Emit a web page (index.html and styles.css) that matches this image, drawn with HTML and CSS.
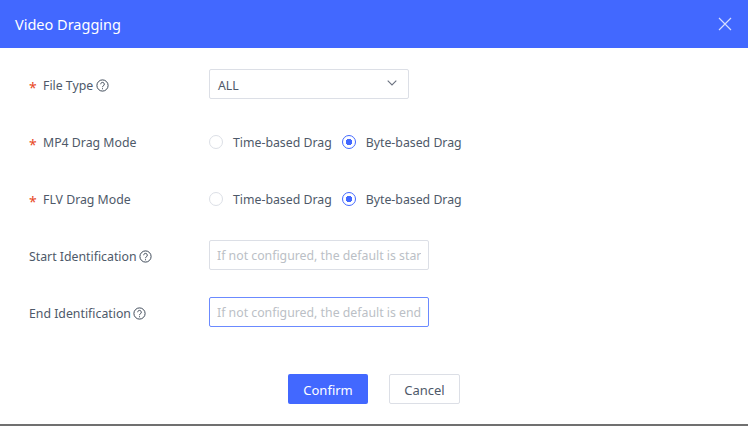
FILE: index.html
```html
<!DOCTYPE html>
<html lang="en">
<head>
    <meta charset="UTF-8">
    <title>Video Dragging</title>
    <link rel="stylesheet" href="styles.css">
</head>
<body>
<div class="dialog">
    <div class="dialog-header">
        <h2>Video Dragging</h2>
        <svg class="close-icon" width="14" height="14" viewBox="0 0 14 14"><path d="M1 1L13 13M13 1L1 13" stroke="#d5ddff" stroke-width="1.2" fill="none"/></svg>
    </div>
    <form class="dialog-body">
        <div class="form-row">
            <label class="required">File Type
                <svg class="help-icon" width="13" height="13" viewBox="0 0 13 13"><circle cx="6.5" cy="6.5" r="5.6" fill="none" stroke="#3f4a59"/><path d="M4.7 5.2a1.8 1.8 0 1 1 2.8 1.5c-.6.4-1 .7-1 1.5" fill="none" stroke="#3f4a59"/><path d="M6 9.2h1v1H6z" fill="#3f4a59"/></svg>
            </label>
            <div class="select">ALL
                <svg width="10" height="6" viewBox="0 0 10 6"><path d="M.7.7L5 5l4.3-4.3" fill="none" stroke="#6b7280" stroke-width="1.1"/></svg>
            </div>
        </div>
        <div class="form-row">
            <label class="required">MP4 Drag Mode</label>
            <div class="radio-group">
                <span class="radio"><i></i>Time-based Drag</span>
                <span class="radio checked"><i></i>Byte-based Drag</span>
            </div>
        </div>
        <div class="form-row">
            <label class="required">FLV Drag Mode</label>
            <div class="radio-group">
                <span class="radio"><i></i>Time-based Drag</span>
                <span class="radio checked"><i></i>Byte-based Drag</span>
            </div>
        </div>
        <div class="form-row">
            <label>Start Identification
                <svg class="help-icon" width="13" height="13" viewBox="0 0 13 13"><circle cx="6.5" cy="6.5" r="5.6" fill="none" stroke="#3f4a59"/><path d="M4.7 5.2a1.8 1.8 0 1 1 2.8 1.5c-.6.4-1 .7-1 1.5" fill="none" stroke="#3f4a59"/><path d="M6 9.2h1v1H6z" fill="#3f4a59"/></svg>
            </label>
            <input type="text" placeholder="If not configured, the default is start">
        </div>
        <div class="form-row">
            <label>End Identification
                <svg class="help-icon" width="13" height="13" viewBox="0 0 13 13"><circle cx="6.5" cy="6.5" r="5.6" fill="none" stroke="#3f4a59"/><path d="M4.7 5.2a1.8 1.8 0 1 1 2.8 1.5c-.6.4-1 .7-1 1.5" fill="none" stroke="#3f4a59"/><path d="M6 9.2h1v1H6z" fill="#3f4a59"/></svg>
            </label>
            <input class="focused" type="text" placeholder="If not configured, the default is end">
        </div>
        <div class="dialog-footer">
            <button class="btn-primary" type="button">Confirm</button>
            <button class="btn-default" type="button">Cancel</button>
        </div>
    </form>
</div>
</body>
</html>
```

FILE: styles.css
```css
html, body {
    margin: 0;
    padding: 0;
    height: 100%;
    background-color: #fff;
    overflow: hidden;
}
body {
    font-family: "Noto Sans", Arial, sans-serif;
    font-size: 12.3px;
    color: #4e5969;
}
.dialog {
    width: 748px;
    height: 424px;
    border-bottom: 2px solid #707070;
}
.dialog-header {
    height: 48px;
    padding: 0 15px;
    background-color: #4268ff;
    display: flex;
    align-items: center;
    justify-content: space-between;
}
.dialog-header h2 {
    margin: 0;
    font-size: 14.5px;
    font-weight: 400;
    color: #fff;
}
.close-icon {
    margin-right: 1px;
}
.dialog-body {
    padding: 21px 0 0 29px;
}
.form-row {
    height: 30px;
    margin-bottom: 27px;
    display: flex;
    align-items: center;
}
.form-row label {
    width: 180px;
    padding-top: 2px;
    display: flex;
    align-items: center;
    gap: 2px;
    white-space: nowrap;
    box-sizing: border-box;
}
.required {
    position: relative;
    padding-left: 14px;
    gap: 3px;
}
.form-row label.required {
    gap: 3px;
}
.required::before {
    content: "*";
    position: absolute;
    left: 0;
    top: 3px;
    font-size: 14px;
    color: #e8481f;
}
.select {
    width: 200px;
    height: 30px;
    box-sizing: border-box;
    padding: 3px 11px 0 8px;
    border: 1px solid #dcdfe6;
    border-radius: 2px;
    display: flex;
    align-items: center;
    justify-content: space-between;
}
.select svg {
    margin-bottom: 6px;
}
.radio-group {
    padding-top: 2px;
    display: flex;
    gap: 10px;
}
.radio {
    display: flex;
    align-items: center;
    gap: 10px;
}
.radio i {
    width: 14px;
    height: 14px;
    box-sizing: border-box;
    border: 1px solid #dcdfe6;
    border-radius: 50%;
}
.radio.checked i {
    border-color: #4268ff;
    background: radial-gradient(circle, #4268ff 0, #4268ff 3px, #fff 3.5px);
}
input[type="text"] {
    width: 220px;
    height: 30px;
    box-sizing: border-box;
    padding: 1px 7px 0;
    border: 1px solid #dcdfe6;
    border-radius: 2px;
    font-family: inherit;
    font-size: 12.3px;
    color: #4e5969;
    outline: none;
}
input::placeholder {
    color: #bbbfc6;
}
input.focused {
    border-color: #6b8aff;
}
.dialog-footer {
    margin: 47px 0 0 259px;
    display: flex;
    gap: 21px;
}
.dialog-footer button {
    height: 30px;
    padding: 2px 0 0;
    box-sizing: border-box;
    border-radius: 2px;
    font-family: inherit;
    font-size: 13px;
    cursor: pointer;
}
.btn-primary {
    width: 80px;
    background-color: #4268ff;
    border: none;
    color: #fff;
}
.btn-default {
    width: 71px;
    background-color: #fff;
    border: 1px solid #dcdfe6;
    color: #4e5969;
}
```
